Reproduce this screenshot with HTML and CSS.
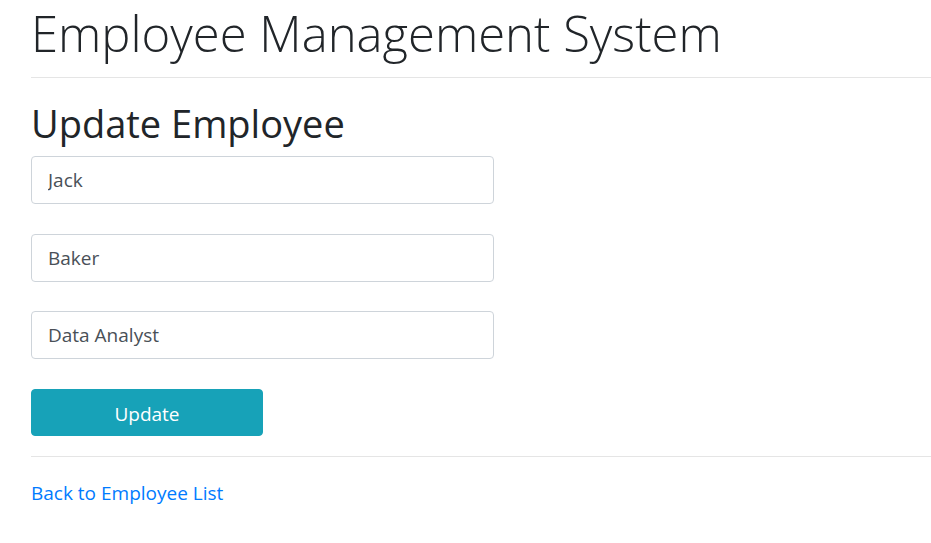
FILE: index.html
```html
<!DOCTYPE html>
<html lang="en">
<head>
<meta charset="utf-8">
<title>Employee Management System</title>
<link rel="stylesheet" href="styles.css">
</head>
<body>
<div class="page">
  <h1 class="title">Employee Management System</h1>
  <hr class="rule">
  <h2 class="subtitle">Update Employee</h2>
  <form class="form">
    <div class="field"><input class="control" type="text" value="Jack"></div>
    <div class="field"><input class="control" type="text" value="Baker"></div>
    <div class="field"><input class="control" type="text" value="Data Analyst"></div>
    <button class="btn" type="button">Update</button>
  </form>
  <hr class="rule rule-bottom">
  <a class="link" href="#">Back to Employee List</a>
</div>
</body>
</html>
```

FILE: styles.css
```css
html, body {
  margin: 0;
  padding: 0;
  background: #fff;
}
body {
  font-family: "Open Sans", "Noto Sans", sans-serif;
  color: #212529;
}
.page {
  padding-left: 31px;
}
.title {
  margin: 0;
  padding: 0;
  font-size: 49px;
  font-weight: 300;
  line-height: 67px;
  letter-spacing: 0;
}
.rule {
  border: 0;
  border-top: 1px solid #e5e5e5;
  margin: 10px 0 0 0;
  height: 0;
}
.subtitle {
  margin: 22px 0 0 0;
  font-size: 38px;
  font-weight: 400;
  line-height: 46px;
}
.form {
  margin-top: 10px;
}
.field {
  margin-bottom: 29.5px;
}
.control {
  display: block;
  box-sizing: border-box;
  width: 463px;
  height: 48px;
  padding: 0 16px;
  font-family: inherit;
  font-size: 19px;
  color: #495057;
  border: 1px solid #ced4da;
  border-radius: 4px;
  background: #fff;
  margin: 0;
}
.btn {
  display: block;
  box-sizing: border-box;
  width: 232px;
  height: 47px;
  margin: 0;
  padding: 3px 0 0 0;
  border: 1px solid #17a2b8;
  border-radius: 4px;
  background: #17a2b8;
  color: #fff;
  font-family: inherit;
  font-size: 19px;
}
.rule-bottom {
  margin-top: 20px;
}
.link {
  display: inline-block;
  margin-top: 23px;
  color: #007bff;
  text-decoration: none;
  font-size: 19px;
}
```
